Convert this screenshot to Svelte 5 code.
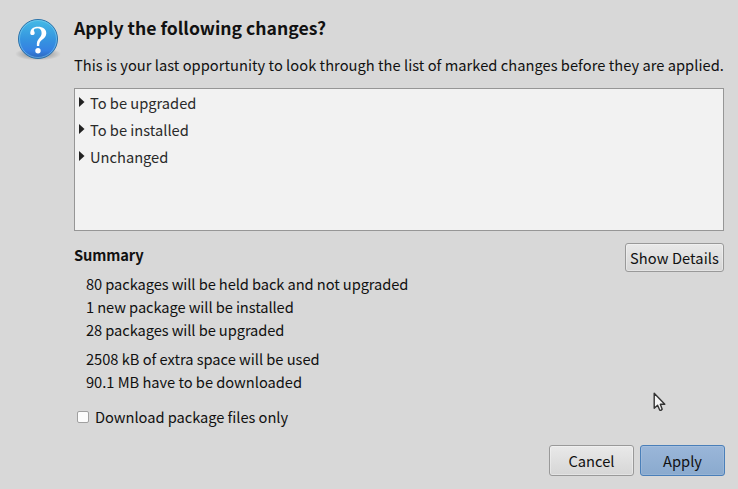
<script lang="ts">
  type Row = {
    label: string;
    open: boolean;
  };

  const held: Array<string> = [
    "80 packages will be held back and not upgraded",
    "1 new package will be installed",
    "28 packages will be upgraded",
  ];
  const sizes: Array<string> = [
    "2508 kB of extra space will be used",
    "90.1 MB have to be downloaded",
  ];

  let rows: Array<Row> = $state([
    { label: "To be upgraded", open: false },
    { label: "To be installed", open: false },
    { label: "Unchanged", open: false },
  ]);
  let downloadOnly: boolean = $state(false);
</script>

<div class="dialog">
  <svg class="icon" viewBox="0 0 48 48">
    <defs>
      <linearGradient id="ball" x1="0" y1="0" x2="0" y2="1">
        <stop offset="0" stop-color="#45bbe6" />
        <stop offset="0.5" stop-color="#3595e0" />
        <stop offset="0.8" stop-color="#3581e2" />
        <stop offset="1" stop-color="#2c66b8" />
      </linearGradient>
      <radialGradient id="shade">
        <stop offset="0.5" stop-color="#000" stop-opacity="0.22" />
        <stop offset="1" stop-color="#000" stop-opacity="0" />
      </radialGradient>
    </defs>
    <ellipse cx="24" cy="40" rx="23" ry="6.5" fill="url(#shade)" />
    <circle cx="24" cy="25" r="19.5" fill="url(#ball)" stroke="#2c71a8" />
    <circle cx="24" cy="25" r="18.5" fill="none" stroke="#8cd5f5" stroke-opacity="0.5" />
    <path
      d="M16.3 19.7C16 15.3 19.2 12.7 24 12.7C29.1 12.7 32.3 15.3 32.3 19.2C32.3 22.3 30.4 24 28.1 25.7C26 27.3 25.2 28.8 25.2 32.1H22.9C22.6 28.2 23.3 26.5 25.2 24.2C26.8 22.3 27.6 21.2 27.6 18.9C27.6 16.1 26.1 14.3 23.5 14.3C21.2 14.3 19.8 15.2 19.8 16.3C19.8 17.1 20.7 17.7 20.7 18.9C20.7 20.3 19.7 21.1 18.5 21.1C17.3 21.1 16.4 20.5 16.3 19.7Z"
      fill="#fff"
    />
    <circle cx="24" cy="36.7" r="2.7" fill="#fff" />
  </svg>

  <main>
    <h1>Apply the following changes?</h1>
    <p class="intro">
      This is your last opportunity to look through the list of marked changes before they are applied.
    </p>

    <div class="tree">
      {#each rows as row}
        <button class="row" onclick={() => (row.open = !row.open)}>
          <svg class="arrow" class:open={row.open} viewBox="0 0 6 10">
            <path d="M0 0L5.5 5L0 10Z" />
          </svg>
          <span>{row.label}</span>
        </button>
      {/each}
    </div>

    <div class="summary-head">
      <h2>Summary</h2>
      <button class="btn details">Show Details</button>
    </div>

    <div class="summary held">
      {#each held as line}
        <div>{line}</div>
      {/each}
    </div>
    <div class="summary sizes">
      {#each sizes as line}
        <div>{line}</div>
      {/each}
    </div>

    <label class="check">
      <input type="checkbox" bind:checked={downloadOnly} />
      <span>Download package files only</span>
    </label>
  </main>

  <footer>
    <button class="btn">Cancel</button>
    <button class="btn apply">Apply</button>
  </footer>

  <svg class="pointer" viewBox="0 0 13 20">
    <path
      d="M1.2 1.2V16.2L4.6 13.2L6.8 18.2Q8.2 18.8 9.2 17.2L7.3 12.3H11.8Z"
      fill="#f4f4f4"
      stroke="#333"
      stroke-width="1.4"
      stroke-linejoin="round"
    />
  </svg>
</div>

<style>
  :global(body) {
    background: #d8d8d8;
  }
  .dialog {
    position: relative;
    box-sizing: border-box;
    width: 738px;
    height: 489px;
    padding: 14px 13px 13px 14px;
    display: grid;
    grid-template-columns: 48px 651px;
    grid-template-rows: 1fr auto;
    column-gap: 12px;
    overflow: hidden;
    background: #d8d8d8;
    color: #111;
    font-family: "Noto Sans CJK SC", "Noto Sans", sans-serif;
    font-size: 11pt;
    line-height: 23px;
    white-space: nowrap;
  }
  .icon {
    width: 48px;
    height: 48px;
  }
  main {
    width: 650px;
  }
  h1,
  h2,
  p {
    margin: 0;
  }
  h1 {
    font-size: 13.2pt;
    line-height: 28px;
  }
  .intro {
    margin-top: 11px;
    letter-spacing: 0.033px;
  }
  .tree {
    box-sizing: border-box;
    height: 143px;
    margin-top: 12px;
    padding: 0 4px;
    border: 1px solid #969696;
    background: #f2f2f2;
  }
  .row {
    display: flex;
    align-items: center;
    gap: 5px;
    width: 100%;
    height: 27px;
    padding: 0;
    border: 0;
    background: none;
    color: #2a2a2a;
    font: inherit;
  }
  .arrow {
    width: 6px;
    height: 10px;
    margin-top: -1px;
    fill: #222;
  }
  .arrow.open {
    transform: rotate(90deg);
  }
  .summary-head {
    display: flex;
    justify-content: space-between;
    margin-top: 12px;
  }
  h2 {
    font-size: 11pt;
    line-height: 23px;
    letter-spacing: -0.12px;
  }
  .btn {
    box-sizing: border-box;
    width: 85px;
    height: 31px;
    padding: 0;
    border: 1px solid #999;
    border-radius: 3px;
    background: linear-gradient(#e9e9e9, #d6d6d6);
    box-shadow: inset 0 0 0 1px #ffffff55;
    color: #111;
    font: inherit;
  }
  .btn.details {
    width: 99px;
    height: 29px;
    letter-spacing: 0.08px;
  }
  .btn.apply {
    border-color: #4a7fb9;
    background: linear-gradient(#9ab6d9, #8aaace);
    box-shadow: inset 0 0 0 1px #ffffff1c;
  }
  .summary {
    padding-left: 12px;
  }
  .held {
    letter-spacing: -0.08px;
  }
  .sizes {
    margin-top: 6px;
    letter-spacing: -0.02px;
  }
  .check {
    display: flex;
    align-items: center;
    gap: 6px;
    margin-top: 12px;
    padding-left: 3px;
    letter-spacing: -0.04px;
  }
  input {
    appearance: none;
    box-sizing: border-box;
    width: 12px;
    height: 12px;
    margin: 0;
    border: 1px solid #a0a0a0;
    border-radius: 2px;
    background: #fcfcfc;
  }
  input:checked {
    background: #4a7fb9;
  }
  footer {
    grid-column: 1 / -1;
    display: flex;
    justify-content: flex-end;
    gap: 6px;
  }
  .pointer {
    position: absolute;
    left: 653px;
    top: 392px;
    width: 13px;
    height: 20px;
    pointer-events: none;
  }
</style>
